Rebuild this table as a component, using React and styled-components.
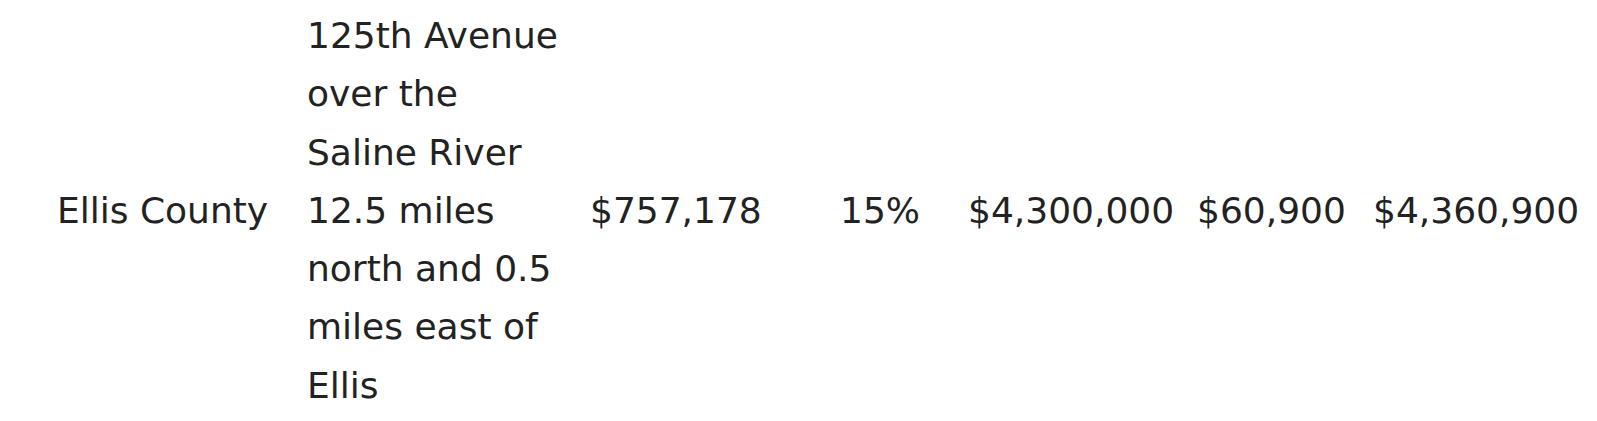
import React from "react";
import styled, { createGlobalStyle } from "styled-components";

const GlobalStyle = createGlobalStyle`
  html, body {
    margin: 0;
    padding: 0;
    background: #ffffff;
  }
  body {
    font-family: "DejaVu Sans", "Liberation Sans", sans-serif;
    color: #222222;
  }
`;

const columnWidths = [250, 283, 250, 128, 229, 176, null];

const row = {
  county: "Ellis County",
  location: "125th Avenue over the Saline River 12.5 miles north and 0.5 miles east of Ellis",
  valuation: "$757,178",
  rate: "15%",
  estimate: "$4,300,000",
  fee: "$60,900",
  total: "$4,360,900",
};

export default function App() {
  return (
    <PageWrapper>
      <GlobalStyle />
      <Table>
        <colgroup>
          {columnWidths.map((w, i) => (
            <Col key={i} $width={w} />
          ))}
        </colgroup>
        <tbody>
          <tr>
            <Cell>{row.county}</Cell>
            <Cell $wrap>{row.location}</Cell>
            <Cell>{row.valuation}</Cell>
            <Cell>{row.rate}</Cell>
            <Cell>{row.estimate}</Cell>
            <Cell>{row.fee}</Cell>
            <Cell>{row.total}</Cell>
          </tr>
        </tbody>
      </Table>
    </PageWrapper>
  );
}

const PageWrapper = styled.div`
  padding: 7px 0 0 57px;
`;

const Table = styled.table`
  border-collapse: collapse;
  table-layout: fixed;
  width: 1540px;
  font-size: 36px;
  line-height: 58.3px;
`;

const Col = styled.col`
  width: ${(p) => (p.$width ? `${p.$width}px` : "auto")};
`;

const Cell = styled.td`
  padding: 0;
  vertical-align: middle;
  white-space: ${(p) => (p.$wrap ? "normal" : "nowrap")};
  padding-right: ${(p) => (p.$wrap ? "15px" : "0")};
`;
